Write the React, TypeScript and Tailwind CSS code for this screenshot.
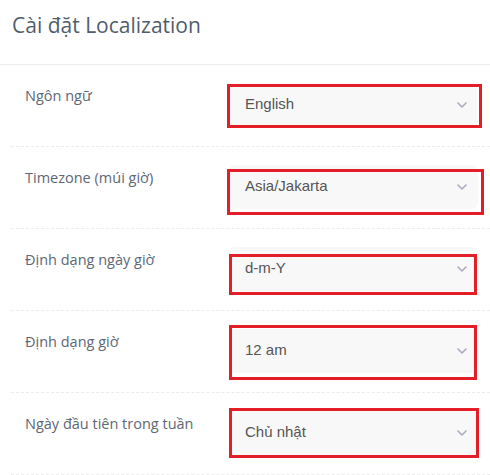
import React from "react";

type Row = {
  label: string;
  value: string;
  box: string; // red highlight placement, relative to the select
};

const rows: Row[] = [
  { label: "Ngôn ngữ", value: "English", box: "-left-[2px] top-[1px] w-[255px] h-[44px]" },
  { label: "Timezone (múi giờ)", value: "Asia/Jakarta", box: "-left-[2px] top-[4px] w-[257px] h-[46px]" },
  { label: "Định dạng ngày giờ", value: "d-m-Y", box: "left-0 top-[7px] w-[248px] h-[41px]" },
  { label: "Định dạng giờ", value: "12 am", box: "left-0 -top-[4px] w-[248px] h-[55px]" },
  { label: "Ngày đầu tiên trong tuần", value: "Chủ nhật", box: "left-0 -top-[3px] w-[250px] h-[50px]" },
];

const Chevron = () => (
  <svg width="10" height="6" viewBox="0 0 10 6" fill="none" className="shrink-0">
    <polyline points="1,1 5,5 9,1" stroke="#a7abc0" strokeWidth="1.6" strokeLinecap="round" strokeLinejoin="round" />
  </svg>
);

export default function App() {
  return (
    <div className="w-[490px] h-[475px] bg-white overflow-hidden">
      {/* Header */}
      <div className="h-[65px] border-b border-[#ececec] pl-[12px] pt-[9px]">
        <h1 className="text-[21px] leading-[32px] text-[#515d6b]" style={{ fontFamily: '"Open Sans", sans-serif' }}>
          Cài đặt Localization
        </h1>
      </div>

      {/* Settings rows */}
      <div className="ml-[11px]">
        {rows.map((r) => (
          <div key={r.label} className="h-[82px] flex border-b border-dashed border-[#ececec]">
            <div
              className="w-[218px] pl-[14px] pt-[21px] text-[14.5px] leading-[20px] text-[#5d6775]"
              style={{ fontFamily: '"Open Sans", sans-serif' }}
            >
              {r.label}
            </div>
            <div className="relative mt-[18px] w-[249px] h-[44px]">
              <div
                className="w-full h-full rounded-md bg-[#f8f8f8] flex items-center justify-between pl-[16px] pr-[11px] pb-[1px] text-[15px] text-[#555]"
                style={{ fontFamily: '"Liberation Sans", Arial, sans-serif' }}
              >
                <span>{r.value}</span>
                <Chevron />
              </div>
              <div className={`absolute ${r.box} border-[3px] border-[#e41e26]`} />
            </div>
          </div>
        ))}
      </div>
    </div>
  );
}
